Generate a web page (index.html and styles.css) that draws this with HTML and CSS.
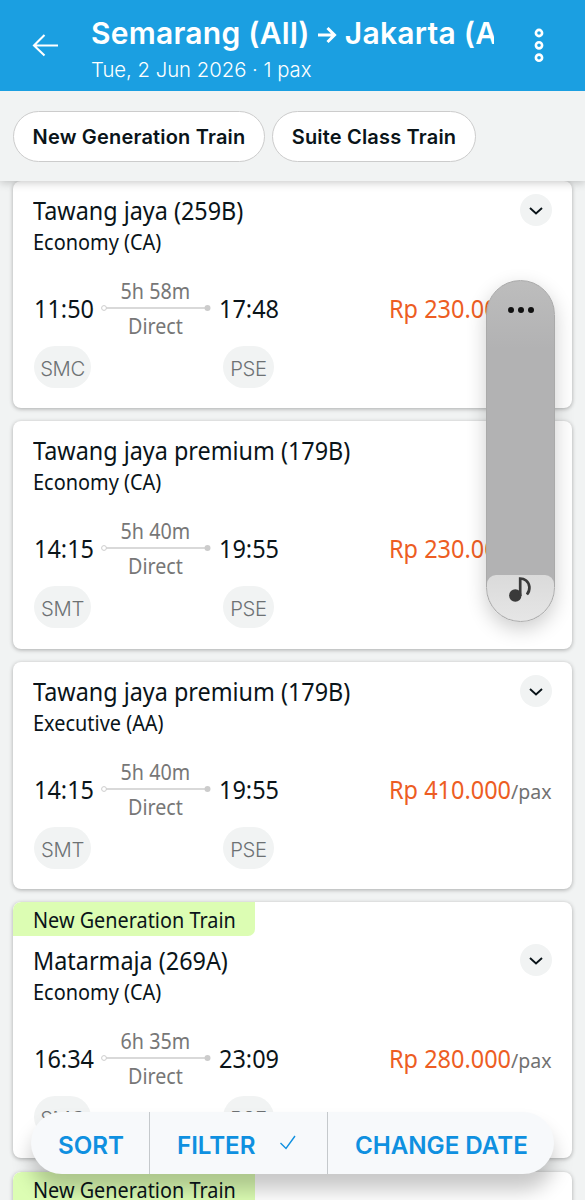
FILE: index.html
```html
<!DOCTYPE html>
<html lang="en">
<head>
<meta charset="utf-8">
<title>Train results</title>
<link rel="stylesheet" href="styles.css">
</head>
<body>
<div class="screen">
  <header class="topbar">
    <svg class="back" viewBox="0 0 28 24" width="28" height="24"><path d="M12.500 2 2 12.500l10.500 10M2 12.500h24" fill="none" stroke="#fff" stroke-width="2.1"/></svg>
    <div class="heading">
      <h1><span class="from">Semarang (All)</span><svg class="arrow" viewBox="0 0 20 18" width="20" height="18"><path d="M1 9h16M10.500 2l7 7-7 7" fill="none" stroke="#fff" stroke-width="3"/></svg><span class="to">Jakarta (A</span></h1>
      <p>Tue, 2 Jun 2026 · 1 pax</p>
    </div>
    <svg class="more" viewBox="0 0 10 36" width="10" height="36"><g fill="none" stroke="#fff" stroke-width="2.6"><circle cx="5" cy="6" r="3.100"/><circle cx="5" cy="18.300" r="3.100"/><circle cx="5" cy="30.700" r="3.100"/></g></svg>
  </header>
  <nav class="chips"><button class="chip gen">New Generation Train</button><button class="chip suite">Suite Class Train</button></nav>
  <main class="results" id="results"></main>
  <div class="volume">
    <span class="dots"><i></i><i></i><i></i></span>
    <div class="level"><svg viewBox="0 0 24 28" width="24" height="28"><circle cx="7.300" cy="19.500" r="6.200" fill="#3a3a3a"/><path d="M12.200 20V2.500c4 0 8.600 2.500 9.200 8.500.2 3-.8 5.500-2.500 7.500" fill="none" stroke="#3a3a3a" stroke-width="2.700"/></svg></div>
  </div>
  <div class="actions">
    <span class="action sort">SORT</span>
    <span class="action filter">FILTER<svg viewBox="0 0 18 16" width="18" height="16"><path d="M1.500 8l5.500 5.500L16 1" fill="none" stroke="#0f90e0" stroke-width="1.400"/></svg></span>
    <span class="action date">CHANGE DATE</span>
  </div>
</div>
<script src="app.js"></script>
</body>
</html>
```
FILE: styles.css
```css
* { box-sizing: border-box; }
body { margin: 0; background: #f1f3f3; }
.screen { position: relative; width: 585px; height: 1200px; overflow: hidden; display: flex; flex-direction: column; font-family: "Noto Sans", sans-serif; color: #0a1419; background: #f1f3f3; }
.topbar { position: relative; z-index: 3; flex: none; height: 91px; display: flex; padding: 0 40px 0 32px; background: #1b9fe1; color: #fff; }
.back { margin-top: 33px; }
.heading { width: 403px; margin-left: 31px; overflow: hidden; }
.heading h1 { display: flex; align-items: center; margin: 13px 0 0; height: 40px; font: 600 30px/40px Inter, sans-serif; letter-spacing: .25px; white-space: nowrap; }
.arrow { flex: none; margin: 4px 8px 0 7px; }
.heading p { margin: 3px 0 0; font: 300 20.300px/27px Inter, sans-serif; }
.more { margin: 27px 0 0 40px; }
.chips { flex: none; height: 90px; display: flex; gap: 7px; padding: 20px 13px 0; position: relative; z-index: 2; background: #f1f3f3; box-shadow: 0 1px 9px rgba(0,0,0,.24); }
.chip { height: 51px; padding: 0; border: 1px solid #ccc; border-radius: 26px; background: #fff; color: #0a1419; font: 600 20px Inter, sans-serif; letter-spacing: .18px; white-space: nowrap; }
.gen { width: 252px; }
.suite { width: 204px; }
.results { display: flex; flex-direction: column; gap: 13.300px; padding: 0 13px; }
.card { flex: none; width: 559px; height: 227.200px; padding: 14px 20px 0; background: #fff; border-radius: 8px; box-shadow: 0 1px 4px rgba(0,0,0,.3); overflow: hidden; }
.card b { display: inline-block; font-weight: 400; transform: scaleX(.943); transform-origin: 0 50%; }
.tagged { height: 256px; padding-top: 0; }
.tag { display: block; width: 242px; height: 34px; margin: 0 0 9px -20px; padding-left: 20px; border-radius: 8px 0 7px 0; background: #dcfdb3; font-size: 21.300px; line-height: 36px; white-space: nowrap; }
.card .tag b { transform: scaleX(.932); }
.top { display: flex; justify-content: space-between; height: 31px; }
.top h2 { margin: 0; font: 400 24.800px/31px "Noto Sans", sans-serif; white-space: nowrap; }
.expand { width: 32px; height: 32px; margin-top: -1px; border-radius: 50%; background: #f1f3f3; display: grid; place-items: center; }
.expand svg { margin-top: 2px; }
.class { margin: 0; font-size: 21.300px; line-height: 31px; }
.card .class b { transform: scaleX(.935); }
.trip { display: flex; height: 66px; margin-top: 18px; }
.time { width: 60px; padding: 17px 0 0 1px; font-size: 24.900px; line-height: 32px; white-space: nowrap; }
.leg + .time { padding-left: 0; }
.leg { width: 110px; margin: 0 8px; color: #777; font-size: 21.300px; text-align: center; }
.leg span { display: block; height: 30px; line-height: 31px; white-space: nowrap; }
.leg svg + span { line-height: 30px; }
.leg svg { display: block; height: 6px; }
.card .leg b { transform: scaleX(.925); transform-origin: 46% 50%; }
.fare { margin-left: auto; padding-top: 17px; width: 163px; color: #ed5d23; font-size: 24.900px; line-height: 32px; white-space: nowrap; }
.fare small { color: #717171; font-size: 20.700px; }
.stations { display: flex; margin-top: 5px; gap: 132px; }
.stations span { width: 57px; height: 42px; margin-left: 1px; border-radius: 21px; background: #f1f3f3; color: #6d7173; font: 350 20.300px/45px Inter, sans-serif; letter-spacing: -.4px; text-align: center; }
.stations span + span { width: 51px; margin-left: 0; }
.volume { position: absolute; z-index: 4; left: 486px; top: 280px; width: 69px; height: 342px; border: 1px solid #aaa; border-radius: 35px; overflow: hidden; background: linear-gradient(#bdbdbd, #b2b2b3 20%, #b2b2b3); box-shadow: 0 7px 20px rgba(0,0,0,.2); display: flex; flex-direction: column; justify-content: space-between; }
.dots { display: flex; justify-content: center; gap: 4px; margin-top: 26px; }
.dots i { width: 6px; height: 6px; border-radius: 50%; background: #111; }
.level { height: 46px; border-radius: 9px 9px 0 0; background: linear-gradient(#dadada, #e6e6e6); }
.level svg { display: block; margin: 1px 0 0 21px; }
.actions { position: absolute; z-index: 5; left: 31px; top: 1112px; width: 523px; height: 62px; border-radius: 31px; background: #f7f9fb; box-shadow: 0 16px 20px rgba(0,0,0,.22); display: flex; color: #0f90e0; font: 600 24.200px/67px Inter, sans-serif; letter-spacing: -.05px; white-space: nowrap; }
.action { border-right: 1px solid #c5c9cc; }
.sort { width: 119px; padding-left: 27px; }
.filter { width: 178px; padding-left: 27px; display: flex; align-items: flex-start; }
.filter svg { margin: 23px 0 0 24px; }
.date { padding-left: 27px; border: 0; }
```
FILE: app.js
```js
const trains = [
  ["Tawang jaya (259B)", "Economy (CA)", "11:50", "5h 58m", "17:48", "230.000", "SMC"],
  ["Tawang jaya premium (179B)", "Economy (CA)", "14:15", "5h 40m", "19:55", "230.000", "SMT"],
  ["Tawang jaya premium (179B)", "Executive (AA)", "14:15", "5h 40m", "19:55", "410.000", "SMT"],
  ["Matarmaja (269A)", "Economy (CA)", "16:34", "6h 35m", "23:09", "280.000", "SMC", true],
  ["", "", "", "", "", "", "", true]
];
document.getElementById("results").innerHTML = trains.map(([name, cls, dep, dur, arr, fare, station, tagged]) => `
<article class="card ${tagged ? "tagged" : ""}">
  ${tagged ? '<span class="tag"><b>New Generation Train</b></span>' : ""}
  ${name ? `<div class="top"><h2><b>${name}</b></h2><span class="expand"><svg viewBox="0 0 14 8" width="14" height="8"><path d="M1 1l6 5.500L13 1" fill="none" stroke="#0a1419" stroke-width="1.900"/></svg></span></div>
  <p class="class"><b>${cls}</b></p>
  <div class="trip"><span class="time"><b>${dep}</b></span>
    <div class="leg"><span><b>${dur}</b></span><svg viewBox="0 0 110 6" width="110" height="6"><path d="M5 3h101" stroke="#ccc" stroke-width="1.500"/><circle cx="3" cy="3" r="2.400" fill="#fff" stroke="#ccc"/><circle cx="106.500" cy="3" r="3" fill="#ccc"/></svg><span><b>Direct</b></span></div>
    <span class="time"><b>${arr}</b></span><span class="fare"><b>Rp ${fare}<small>/pax</small></b></span></div>
  <div class="stations"><span>${station}</span><span>PSE</span></div>` : ""}
</article>`).join("");
```
